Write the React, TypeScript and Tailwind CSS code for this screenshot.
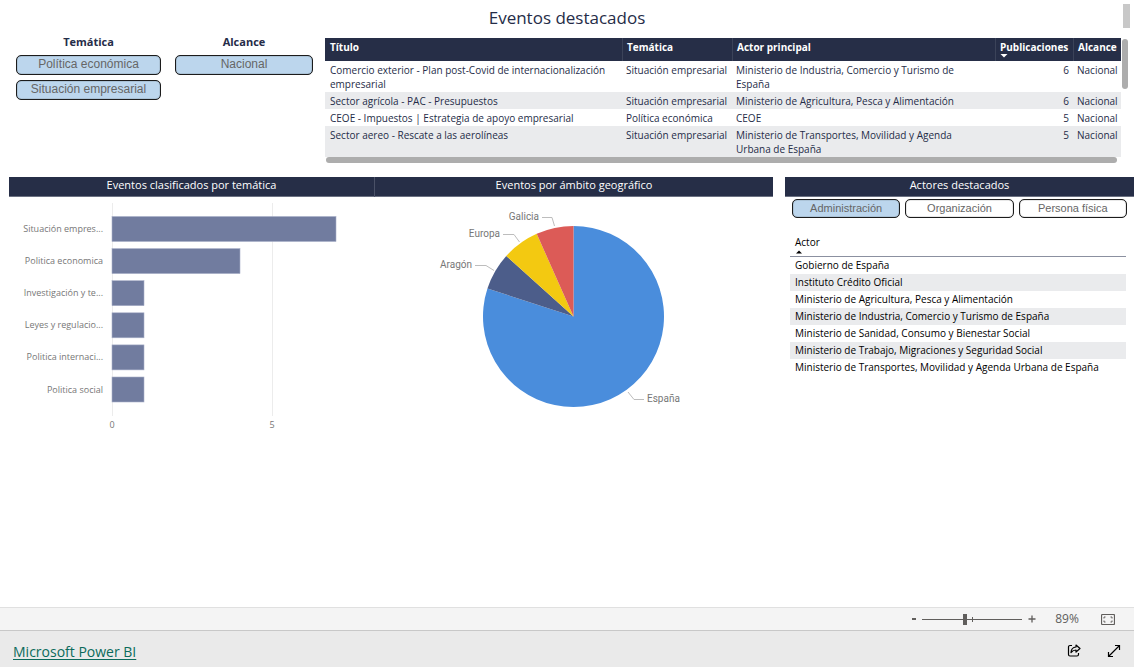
import React, { useState } from "react";

type Evento = {
  titulo: string;
  tematica: string;
  actor: string;
  publicaciones: number;
  alcance: string;
};

const eventos: Evento[] = [
  {
    titulo: "Comercio exterior - Plan post-Covid de internacionalización empresarial",
    tematica: "Situación empresarial",
    actor: "Ministerio de Industria, Comercio y Turismo de España",
    publicaciones: 6,
    alcance: "Nacional",
  },
  {
    titulo: "Sector agrícola - PAC - Presupuestos",
    tematica: "Situación empresarial",
    actor: "Ministerio de Agricultura, Pesca y Alimentación",
    publicaciones: 6,
    alcance: "Nacional",
  },
  {
    titulo: "CEOE - Impuestos | Estrategia de apoyo empresarial",
    tematica: "Política económica",
    actor: "CEOE",
    publicaciones: 5,
    alcance: "Nacional",
  },
  {
    titulo: "Sector aereo - Rescate a las aerolíneas",
    tematica: "Situación empresarial",
    actor: "Ministerio de Transportes, Movilidad y Agenda Urbana de España",
    publicaciones: 5,
    alcance: "Nacional",
  },
];

const barras = [
  { label: "Situación empres...", value: 7 },
  { label: "Politica economica", value: 4 },
  { label: "Investigación y te...", value: 1 },
  { label: "Leyes y regulacio...", value: 1 },
  { label: "Politica internaci...", value: 1 },
  { label: "Politica social", value: 1 },
];

const actores = [
  "Gobierno de España",
  "Instituto Crédito Oficial",
  "Ministerio de Agricultura, Pesca y Alimentación",
  "Ministerio de Industria, Comercio y Turismo de España",
  "Ministerio de Sanidad, Consumo y Bienestar Social",
  "Ministerio de Trabajo, Migraciones y Seguridad Social",
  "Ministerio de Transportes, Movilidad y Agenda Urbana de España",
];

const porciones = [
  { name: "España", from: 0, to: 288, color: "#4a8ddc" },
  { name: "Aragón", from: 288, to: 312, color: "#4c5d8a" },
  { name: "Europa", from: 312, to: 336, color: "#f3c911" },
  { name: "Galicia", from: 336, to: 360, color: "#dc5b57" },
];

function slicePath(from: number, to: number, cx: number, cy: number, r: number) {
  const point = (deg: number) => {
    const a = (deg * Math.PI) / 180;
    return `${(cx + r * Math.sin(a)).toFixed(2)} ${(cy - r * Math.cos(a)).toFixed(2)}`;
  };
  return `M${cx} ${cy}L${point(from)}A${r} ${r} 0 ${to - from > 180 ? 1 : 0} 1 ${point(to)}Z`;
}

function Chip({ label, small, initial = false }: { label: string; small?: boolean; initial?: boolean }) {
  const [on, setOn] = useState(initial);
  return (
    <button
      type="button"
      aria-pressed={on}
      onClick={() => setOn(!on)}
      className={
        "flex w-full items-center justify-center rounded-[5px] border border-[#1c1c1c] font-['Liberation_Sans',sans-serif] text-[#666] shadow-[inset_0_0_1px_#1c1c1c] " +
        (small ? "h-[19px] text-[11px] " : "h-5 pb-0.5 text-[12px] ") +
        (on ? "bg-[#bcd6ed]" : "bg-white")
      }
    >
      {label}
    </button>
  );
}

function BarHeading({ children }: { children: React.ReactNode }) {
  return (
    <h2 className="h-5 border-b border-[#6b7182] bg-[#262e47] text-center text-[11px] leading-4 text-white">
      {children}
    </h2>
  );
}

function BarChart() {
  return (
    <svg viewBox="0 1 365 240" className="w-full" role="img" aria-label="Eventos clasificados por temática">
      <path d="M103.5 7V220M263.5 7V220" stroke="#ececec" />
      {barras.map((b, i) => (
        <g key={b.label}>
          <rect x={103} y={20.5 + i * 32.1} width={b.value * 32} height={25} fill="#717c9f" stroke="#a9b0c8" strokeWidth={0.6} />
          <text x={94} y={36 + i * 32.1} textAnchor="end" fontSize={9} fill="#777">
            {b.label}
          </text>
        </g>
      ))}
      <text x={103} y={232} textAnchor="middle" fontSize={9} fill="#777">0</text>
      <text x={263} y={232} textAnchor="middle" fontSize={9} fill="#777">5</text>
    </svg>
  );
}

function PieChart() {
  return (
    <svg viewBox="0 1 399 240" className="w-full" role="img" aria-label="Eventos por ámbito geográfico">
      {porciones.map((p) => (
        <path key={p.name} d={slicePath(p.from, p.to, 199.5, 120.5, 90.5)} fill={p.color} />
      ))}
      <g fill="none" stroke="#bdbdbd">
        <path d="M168 21.5H178L180.500 30" />
        <path d="M129 38.500H140L145.500 46" />
        <path d="M101 69.500H112L120 74.500" />
        <path d="M254 196L260 203.500H270" />
      </g>
      <g fontSize={10} fill="#777" className="font-[Roboto,sans-serif]">
        <text x={165} y={24} textAnchor="end">Galicia</text>
        <text x={126} y={41} textAnchor="end">Europa</text>
        <text x={98} y={72} textAnchor="end">Aragón</text>
        <text x={273} y={206}>España</text>
      </g>
    </svg>
  );
}

function EventosTable() {
  const th = "h-[23px] border-l border-[#3b4359] first:border-[#262e47] px-1 pt-[2px] align-top font-bold leading-[14px]";
  const td = "pl-1 pr-1 pt-[2px] pb-px align-top leading-[14px]";
  return (
    <table className="w-full table-fixed border-separate border-spacing-0 text-[10px] text-[#252c48]">
      <colgroup>
        <col className="w-[297px]" />
        <col className="w-[110px]" />
        <col />
        <col className="w-[78px]" />
        <col className="w-[48px]" />
      </colgroup>
      <thead className="bg-[#262e47] text-left text-white">
        <tr>
          <th className={th}>Título</th>
          <th className={th}>Temática</th>
          <th className={th}>Actor principal</th>
          <th className={th} aria-sort="descending">
            Publicaciones
            <svg viewBox="0 0 8 4" className="h-1 w-2" aria-hidden="true"><path d="M0.500 0H7.500L4 3.500Z" fill="#fff" /></svg>
          </th>
          <th className={th}>Alcance</th>
        </tr>
      </thead>
      <tbody>
        {eventos.map((e) => (
          <tr key={e.titulo} className="even:bg-[#eaebed]">
            <td className="pt-[2px] pr-1 pb-px pl-[5px] align-top leading-[14px]">{e.titulo}</td>
            <td className={td + " whitespace-nowrap"}>{e.tematica}</td>
            <td className="pt-[2px] pr-8 pb-px pl-1 align-top leading-[14px]">{e.actor}</td>
            <td className={td + " text-right"}>{e.publicaciones}</td>
            <td className={td}>{e.alcance}</td>
          </tr>
        ))}
      </tbody>
    </table>
  );
}

export default function App() {
  const [zoom, setZoom] = useState(43);
  return (
    <div className="relative flex min-h-screen flex-col bg-white font-['Open_Sans','Noto_Sans',sans-serif] text-[#252c48]">
      <div className="absolute top-1 right-1 h-6 w-[7px] bg-[#c8c8c8]" />
      <main className="flex-1">
        <h1 className="h-[38px] pt-1 text-center text-[17px] leading-7">Eventos destacados</h1>

        <div className="flex pl-4">
          <div className="flex w-[297px] shrink-0 gap-3.5">
            <section className="flex w-[145px] flex-col gap-[5px]">
              <h2 className="-mt-1 text-center text-[11px] leading-4 font-bold">Temática</h2>
              <Chip label="Política económica" initial />
              <Chip label="Situación empresarial" initial />
            </section>
            <section className="flex flex-1 flex-col gap-[5px]">
              <h2 className="-mt-1 text-center text-[11px] leading-4 font-bold">Alcance</h2>
              <Chip label="Nacional" initial />
            </section>
          </div>
          <div className="ml-3 min-w-0 flex-1">
            <EventosTable />
            <div className="mr-1 ml-px h-1.5 rounded-full bg-[#adadad]" />
          </div>
          <div className="mt-px mr-1.5 ml-px h-[50px] w-1.5 rounded-full bg-[#adadad]" />
        </div>

        <div className="mt-3.5 flex pl-[9px]">
          <section className="w-[365px]">
            <BarHeading>Eventos clasificados por temática</BarHeading>
            <BarChart />
          </section>
          <section className="flex-1">
            <div className="border-l border-[#4a5167]">
              <BarHeading>Eventos por ámbito geográfico</BarHeading>
            </div>
            <PieChart />
          </section>
          <section className="ml-3 w-[349px]">
            <BarHeading>Actores destacados</BarHeading>
            <div className="grid grid-cols-3 gap-[5px] px-[7px] pt-0.5">
              <Chip label="Administración" small initial />
              <Chip label="Organización" small />
              <Chip label="Persona física" small />
            </div>
            <div className="mt-[17px] pr-2 pl-[5px]">
              <table className="w-full border-separate border-spacing-0 text-[10px] text-black">
                <thead>
                  <tr>
                    <th className="h-[22px] border-b border-[#8b90a0] px-[5px] text-left align-top leading-[15px] font-normal" aria-sort="ascending">
                      Actor
                      <svg viewBox="0 0 8 4" className="h-1 w-2" aria-hidden="true"><path d="M1 3.500H7L4 0.500Z" fill="#000" /></svg>
                    </th>
                  </tr>
                </thead>
                <tbody>
                  {actores.map((a) => (
                    <tr key={a} className="even:bg-[#eaebed]">
                      <td className="h-[17px] px-[5px] leading-[17px]">{a}</td>
                    </tr>
                  ))}
                </tbody>
              </table>
            </div>
          </section>
        </div>
      </main>

      <div className="flex h-[23px] items-center justify-end border-t border-[#e0e0e0] bg-[#f4f4f4] pr-[19px] text-[#605e5c]">
        <button type="button" aria-label="Reducir" onClick={() => setZoom(Math.max(0, zoom - 5))} className="flex w-4 justify-center">
          <svg viewBox="0 0 10 10" className="size-2.5"><path d="M3 5H7" stroke="currentColor" strokeWidth="2" /></svg>
        </button>
        <div className="relative flex h-3 w-[100px] items-center">
          <input
            type="range"
            aria-label="Zoom"
            value={zoom}
            onChange={(e) => setZoom(Number(e.target.value))}
            className="h-3 w-full appearance-none bg-transparent [&::-webkit-slider-runnable-track]:h-px [&::-webkit-slider-runnable-track]:bg-[#605e5c] [&::-webkit-slider-thumb]:-mt-[5px] [&::-webkit-slider-thumb]:h-[11px] [&::-webkit-slider-thumb]:w-1 [&::-webkit-slider-thumb]:appearance-none [&::-webkit-slider-thumb]:bg-[#605e5c]"
          />
          <span className="absolute top-1 left-1/2 h-[5px] w-px bg-[#605e5c]" />
        </div>
        <button type="button" aria-label="Ampliar" onClick={() => setZoom(Math.min(100, zoom + 5))} className="flex w-5 justify-center">
          <svg viewBox="0 0 10 10" className="size-2.5"><path d="M1.500 5H8.500M5 1.500V8.500" stroke="currentColor" strokeWidth="1.3" /></svg>
        </button>
        <span className="w-[50px] text-center text-[12px]">89%</span>
        <button type="button" aria-label="Ajustar a la página" className="ml-[9px]">
          <svg viewBox="0 0 14 11" className="h-[11px] w-3.5" fill="none" stroke="currentColor">
            <rect x="0.500" y="0.500" width="13" height="10" rx="1" strokeWidth="1.2" />
            <path d="M4.500 3H3V4.500M9.500 3H11V4.500M4.500 8H3V6.500M9.500 8H11V6.500" />
          </svg>
        </button>
      </div>

      <footer className="flex h-[37px] items-center justify-between border-t border-[#c8c8c8] bg-[#eaeaea] pt-1 pr-[13px] pl-[13px]">
        <a href="#" className="text-[14px] text-[#0b6a5b] underline underline-offset-2">Microsoft Power BI</a>
        <div className="flex items-center gap-[26px] text-black">
          <button type="button" aria-label="Compartir">
            <svg viewBox="0 0 14 14" className="size-3.5" fill="none" stroke="currentColor" strokeWidth="1.2">
              <path d="M5 1.500H3A1.500 1.500 0 0 0 1.500 3V10.500A1.500 1.500 0 0 0 3 12H10A1.500 1.500 0 0 0 11.500 10.500V9" />
              <path d="M9 1L13 4.500L9 8V6C7 6 5.500 6.700 4 8.500C4.200 5.300 6 3.200 9 3Z" strokeLinejoin="round" />
            </svg>
          </button>
          <button type="button" aria-label="Pantalla completa">
            <svg viewBox="0 0 14 14" className="size-3.5" fill="none" stroke="currentColor" strokeWidth="1.2">
              <path d="M1.500 12.500L12.500 1.500M8 1.500H12.500V6M1.500 8V12.500H6" />
            </svg>
          </button>
        </div>
      </footer>
    </div>
  );
}
